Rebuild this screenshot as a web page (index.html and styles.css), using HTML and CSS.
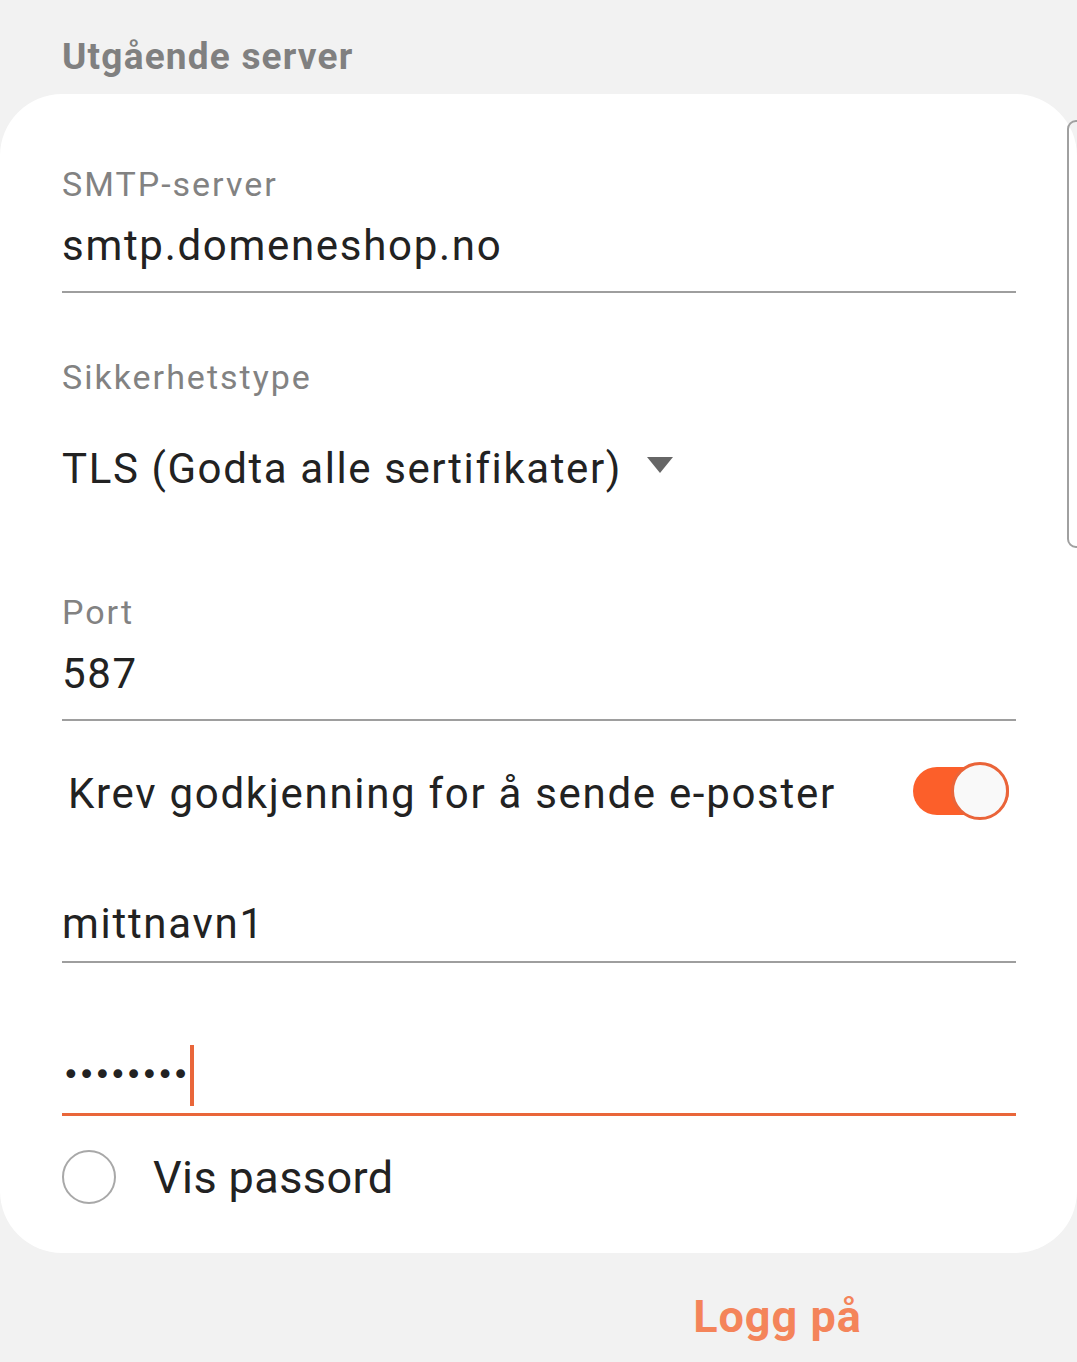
FILE: index.html
```html
<!DOCTYPE html>
<html lang="no">
<head>
    <meta charset="UTF-8">
    <meta name="viewport" content="width=device-width, initial-scale=1.0">
    <title>Utgående server</title>
    <link rel="stylesheet" href="styles.css">
</head>
<body>
    <h2 class="section-title">Utgående server</h2>

    <div class="card">
        <div class="field">
            <div class="label">SMTP-server</div>
            <div class="value underlined">smtp.domeneshop.no</div>
        </div>

        <div class="field security">
            <div class="label">Sikkerhetstype</div>
            <div class="value select">
                <span>TLS (Godta alle sertifikater)</span>
                <span class="caret"></span>
            </div>
        </div>

        <div class="field port">
            <div class="label">Port</div>
            <div class="value underlined">587</div>
        </div>

        <div class="switch-row">
            <span>Krev godkjenning for å sende e-poster</span>
            <span class="switch on"><span class="thumb"></span></span>
        </div>

        <div class="field user">
            <div class="value underlined">mittnavn1</div>
        </div>

        <div class="field password">
            <div class="value focused">
                <span class="dots">••••••••</span><span class="cursor"></span>
            </div>
        </div>

        <label class="check-row">
            <span class="radio"></span>
            <span>Vis passord</span>
        </label>

        <div class="scrollbar"></div>
    </div>

    <div class="actions">
        <span></span>
        <button class="login">Logg på</button>
    </div>
</body>
</html>
```

FILE: styles.css
```css
/* General */
body {
    margin: 0;
    background-color: #f2f2f2;
    font-family: Roboto, "Noto Sans", sans-serif;
    color: #222222;
    overflow: hidden;
}

.section-title {
    margin: 0;
    height: 94px;
    padding: 0 0 0 62px;
    box-sizing: border-box;
    font-size: 37px;
    font-weight: bold;
    line-height: 114px;
    color: #808080;
    letter-spacing: 1.2px;
}

/* Card */
.card {
    position: relative;
    background-color: #ffffff;
    border-radius: 62px;
    padding: 70px 61px 43px 62px;
}

.label {
    font-size: 34px;
    line-height: 40px;
    color: #828282;
    letter-spacing: 2px;
}

.value {
    font-size: 42px;
    line-height: 50px;
    margin-top: 17px;
    letter-spacing: 1.7px;
}

.underlined {
    padding-bottom: 20px;
    border-bottom: 2px solid #9e9e9e;
}

.security {
    margin-top: 64px;
}

.security .value {
    margin-top: 47px;
    letter-spacing: 1.6px;
}

.select {
    display: flex;
    align-items: center;
}

.caret {
    width: 0;
    height: 0;
    margin-left: 25px;
    margin-top: -8px;
    border-left: 13px solid transparent;
    border-right: 13px solid transparent;
    border-top: 16px solid #666666;
}

.port {
    margin-top: 98px;
}

/* Switch row */
.switch-row {
    height: 145px;
    display: flex;
    align-items: center;
    justify-content: space-between;
    padding-left: 6px;
    padding-right: 7px;
    font-size: 42px;
    letter-spacing: 1.7px;
}

.switch {
    position: relative;
    width: 96px;
    height: 48px;
    margin-top: -6px;
    border-radius: 24px;
    background-color: #fc5f2a;
}

.switch .thumb {
    position: absolute;
    right: 0;
    top: -5px;
    width: 52px;
    height: 52px;
    border-radius: 50%;
    background-color: #f9f9f9;
    border: 3px solid #ea6439;
}

.user .value {
    margin-top: 33px;
    padding-bottom: 12px;
}

.password .value {
    margin-top: 81px;
}

.focused {
    display: flex;
    align-items: center;
    height: 62px;
    padding-bottom: 7px;
    border-bottom: 3px solid #e9663a;
}

.dots {
    font-size: 30px;
    letter-spacing: -2px;
    font-family: "DejaVu Sans", sans-serif;
}

.cursor {
    display: inline-block;
    width: 4px;
    height: 61px;
    margin-left: 2px;
    background-color: #e9663a;
}

/* Radio */
.check-row {
    display: flex;
    align-items: center;
    height: 66px;
    margin-top: 28px;
    font-size: 45px;
    letter-spacing: 0.4px;
}

.radio {
    width: 50px;
    height: 50px;
    border-radius: 50%;
    border: 2px solid #a8a8a8;
    margin-right: 37px;
}

.scrollbar {
    position: absolute;
    right: -8px;
    top: 26px;
    width: 14px;
    height: 424px;
    border: 2px solid #a0a0a0;
    border-radius: 14px;
}

/* Bottom action */
.actions {
    display: grid;
    grid-template-columns: 1fr 1fr;
    padding: 26px 61px 0 62px;
}

.login {
    background: none;
    border: none;
    font-family: Roboto, sans-serif;
    font-size: 45px;
    font-weight: bold;
    letter-spacing: 1px;
    color: #f4845a;
    cursor: pointer;
    padding: 0;
    line-height: 76px;
}
```
